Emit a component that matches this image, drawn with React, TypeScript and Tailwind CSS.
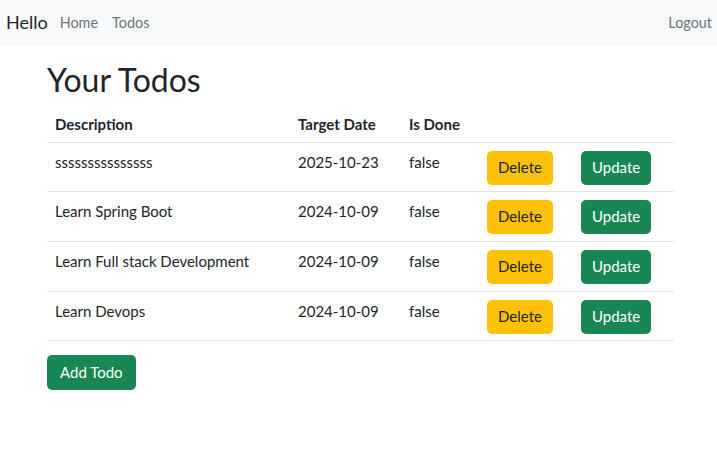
const todos = [
  { id: 1, description: "sssssssssssssss", targetDate: "2025-10-23", done: false },
  { id: 2, description: "Learn Spring Boot", targetDate: "2024-10-09", done: false },
  { id: 3, description: "Learn Full stack Development", targetDate: "2024-10-09", done: false },
  { id: 4, description: "Learn Devops", targetDate: "2024-10-09", done: false },
];

function Header() {
  return (
    <nav className="flex h-[46px] items-center bg-[#f8f9fa] pl-[6px] pr-[5px]">
      <a className="mr-[12px] text-[18px] text-[#212529]">Hello</a>
      <a className="mr-[14px] text-[14.4px] text-[#6c757d]">Home</a>
      <a className="text-[14.4px] text-[#6c757d]">Todos</a>
      <a className="ml-auto text-[14.4px] text-[#6c757d]">Logout</a>
    </nav>
  );
}

function TodoRow({ todo }: { todo: (typeof todos)[number] }) {
  return (
    <tr className="border-b border-[#dee2e6] align-top">
      <td className="px-2 pt-[9px] pb-[6.7px]">{todo.description}</td>
      <td className="px-2 pt-[9px] pb-[6.7px]">{todo.targetDate}</td>
      <td className="px-2 pt-[9px] pb-[6.7px]">{String(todo.done)}</td>
      <td className="px-2 pt-[8px] pb-[6.7px]">
        <button className="h-[34px] rounded-[5px] bg-[#ffc107] px-[11px] text-[#212529]">Delete</button>
      </td>
      <td className="px-2 pt-[8px] pb-[6.7px]">
        <button className="h-[34px] rounded-[5px] bg-[#198754] px-[11px] text-white">Update</button>
      </td>
    </tr>
  );
}

export default function App() {
  return (
    <div className="min-h-[450px] bg-white font-['Lato',sans-serif] text-[15px] leading-[21.6px] text-[#212529]">
      <Header />
      <div className="px-[47px] pt-[14px]">
        <h1 className="mb-[5px] text-[32px] leading-[40px] font-normal">Your Todos</h1>
        <table className="w-[627px] table-fixed border-collapse text-left">
          <colgroup>
            <col className="w-[243px]" />
            <col className="w-[111px]" />
            <col className="w-[78px]" />
            <col className="w-[94px]" />
            <col className="w-[101px]" />
          </colgroup>
          <thead>
            <tr className="border-b border-[#dee2e6] align-bottom">
              <th className="px-2 pt-[9px] pb-[6px] font-bold">Description</th>
              <th className="px-2 pt-[9px] pb-[6px] font-bold">Target Date</th>
              <th className="px-2 pt-[9px] pb-[6px] font-bold">Is Done</th>
              <th className="px-2 pt-[9px] pb-[6px]"></th>
              <th className="px-2 pt-[9px] pb-[6px]"></th>
            </tr>
          </thead>
          <tbody>
            {todos.map((t) => (
              <TodoRow key={t.id} todo={t} />
            ))}
          </tbody>
        </table>
        <button className="mt-[14px] h-[35px] rounded-[5px] bg-[#198754] px-[13px] text-white">Add Todo</button>
      </div>
    </div>
  );
}
